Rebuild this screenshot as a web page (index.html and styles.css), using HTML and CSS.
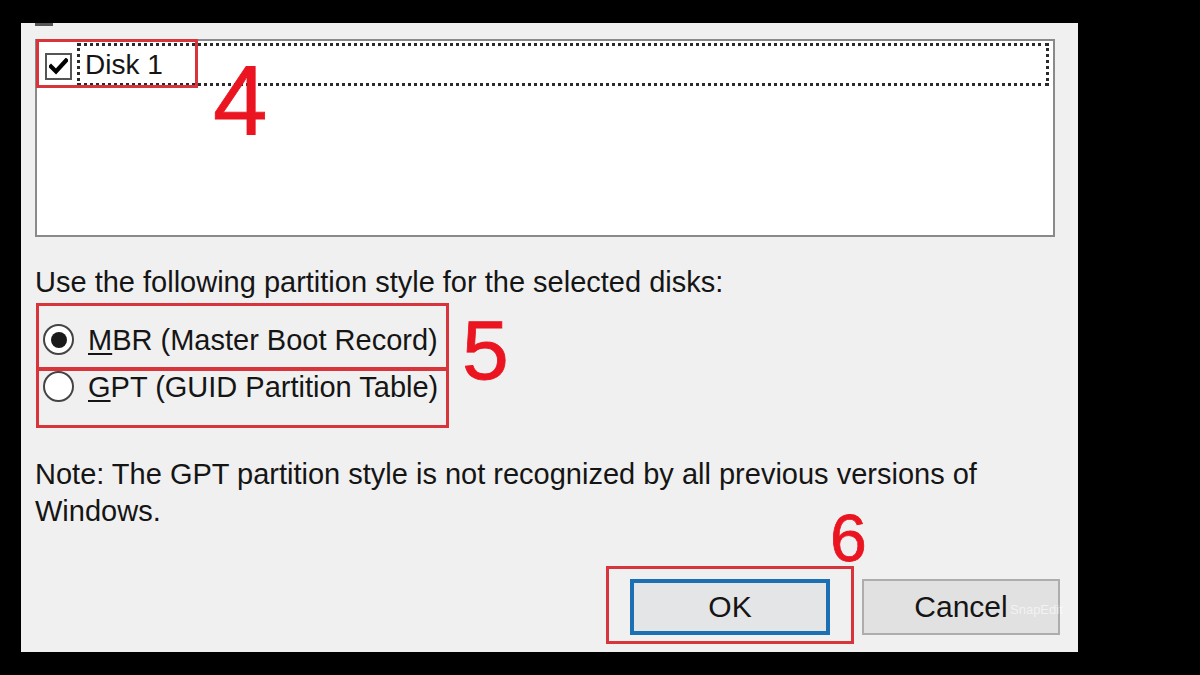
FILE: index.html
```html
<!DOCTYPE html>
<html lang="en">
<head>
<meta charset="utf-8">
<title>Initialize Disk</title>
<link rel="stylesheet" href="styles.css">
</head>
<body>
<div class="dialog">
  <div class="cut-line"></div>
  <div class="listbox">
    <div class="list-item">
      <span class="checkbox">
        <svg width="19" height="17" viewBox="0 0 19 17"><path d="M2 8.5 L7 13.5 L17 2.5" fill="none" stroke="#000" stroke-width="4.2" stroke-linecap="square"/></svg>
      </span>
      <span class="item-focus">Disk 1</span>
    </div>
  </div>
  <p class="prompt">Use the following partition style for the selected disks:</p>
  <div class="radio-row"><span class="radio checked"></span><span class="radio-label"><u>M</u>BR (Master Boot Record)</span></div>
  <div class="radio-row"><span class="radio"></span><span class="radio-label"><u>G</u>PT (GUID Partition Table)</span></div>
  <p class="note">Note: The GPT partition style is not recognized by all previous versions of<br>Windows.</p>
  <div class="buttons">
    <button class="btn btn-default">OK</button>
    <button class="btn">Cancel</button>
  </div>

  <div class="mark mark-disk"></div>
  <div class="mark mark-mbr"></div>
  <div class="mark mark-gpt"></div>
  <div class="mark mark-ok"></div>
  <span class="num num-4">4</span>
  <span class="num num-5">5</span>
  <span class="num num-6">6</span>
  <span class="watermark">SnapEdit</span>
</div>
</body>
</html>
```
FILE: styles.css
```css
html, body {
  margin: 0;
  padding: 0;
  background: #000;
}
body {
  width: 1200px;
  height: 675px;
  overflow: hidden;
  font-family: "Liberation Sans", Arial, sans-serif;
  color: #151515;
}
.dialog {
  position: relative;
  box-sizing: border-box;
  margin: 23px 0 0 21px;
  width: 1057px;
  height: 629px;
  background: #f0f0f0;
  padding: 0 23px 0 14px;
}
.cut-line {
  width: 18px;
  height: 3px;
  background: #555;
}
.listbox {
  margin-top: 13px;
  box-sizing: border-box;
  height: 198px;
  background: #fff;
  border: 2px solid #8a8a8a;
  padding: 2px 4px 0 8px;
}
.list-item {
  display: flex;
  align-items: center;
}
.checkbox {
  box-sizing: border-box;
  width: 27px;
  height: 27px;
  border: 2px solid #555;
  background: #fff;
  display: flex;
  align-items: center;
  justify-content: center;
  margin-right: 5px;
  margin-top: 4px;
}
.item-focus {
  flex: 1;
  box-sizing: border-box;
  height: 43px;
  border: 3px dotted #2a2a2a;
  padding-left: 5px;
  font-size: 28px;
  line-height: 37px;
}
.prompt {
  margin: 27px 0 0 0;
  font-size: 29px;
  line-height: 36px;
}
.radio-row {
  display: flex;
  align-items: center;
  height: 47px;
  padding-left: 8px;
}
.prompt + .radio-row { margin-top: 16px; }
.radio {
  box-sizing: border-box;
  width: 31px;
  height: 31px;
  border-radius: 50%;
  border: 2px solid #444;
  background: #fff;
  display: flex;
  align-items: center;
  justify-content: center;
  margin-right: 14px;
}
.radio.checked::after {
  content: "";
  width: 16px;
  height: 16px;
  border-radius: 50%;
  background: #1a1a1a;
}
.radio-label {
  font-size: 29px;
  line-height: 36px;
}
.radio-label u {
  text-decoration-thickness: 2px;
  text-underline-offset: 3px;
}
.note {
  margin: 46px 0 0 0;
  font-size: 29px;
  line-height: 37px;
}
.buttons {
  display: flex;
  justify-content: flex-end;
  gap: 32px;
  margin-top: 49px;
  margin-right: -5px;
}
.btn {
  box-sizing: border-box;
  width: 198px;
  height: 56px;
  background: #e1e1e1;
  border: 2px solid #adadad;
  font-family: "Liberation Sans", Arial, sans-serif;
  font-size: 30px;
  color: #151515;
  padding: 0;
}
.btn-default {
  width: 200px;
  border: 4px solid #1d6fb4;
  background: #e3e5e7;
}

/* annotation overlays */
.mark {
  position: absolute;
  box-sizing: border-box;
  border: 3px solid #d8343c;
}
.mark-disk { left: 15px; top: 16px; width: 162px; height: 49px; }
.mark-mbr { left: 15px; top: 280px; width: 413px; height: 67px; }
.mark-gpt { left: 15px; top: 345px; width: 413px; height: 60px; }
.mark-ok { left: 585px; top: 543px; width: 248px; height: 78px; }
.num {
  position: absolute;
  color: #ea1520;
  -webkit-text-stroke: 0.8px #ea1520;
  line-height: 1;
  font-family: "Liberation Sans", Arial, sans-serif;
}
.num-4 { left: 192px; top: 28px; font-size: 98px; }
.num-5 { left: 441px; top: 285px; font-size: 84px; }
.num-6 { left: 809px; top: 482px; font-size: 66px; }
.watermark {
  position: absolute;
  left: 989px;
  top: 579px;
  font-size: 13px;
  color: rgba(255, 255, 255, 0.6);
}
```
